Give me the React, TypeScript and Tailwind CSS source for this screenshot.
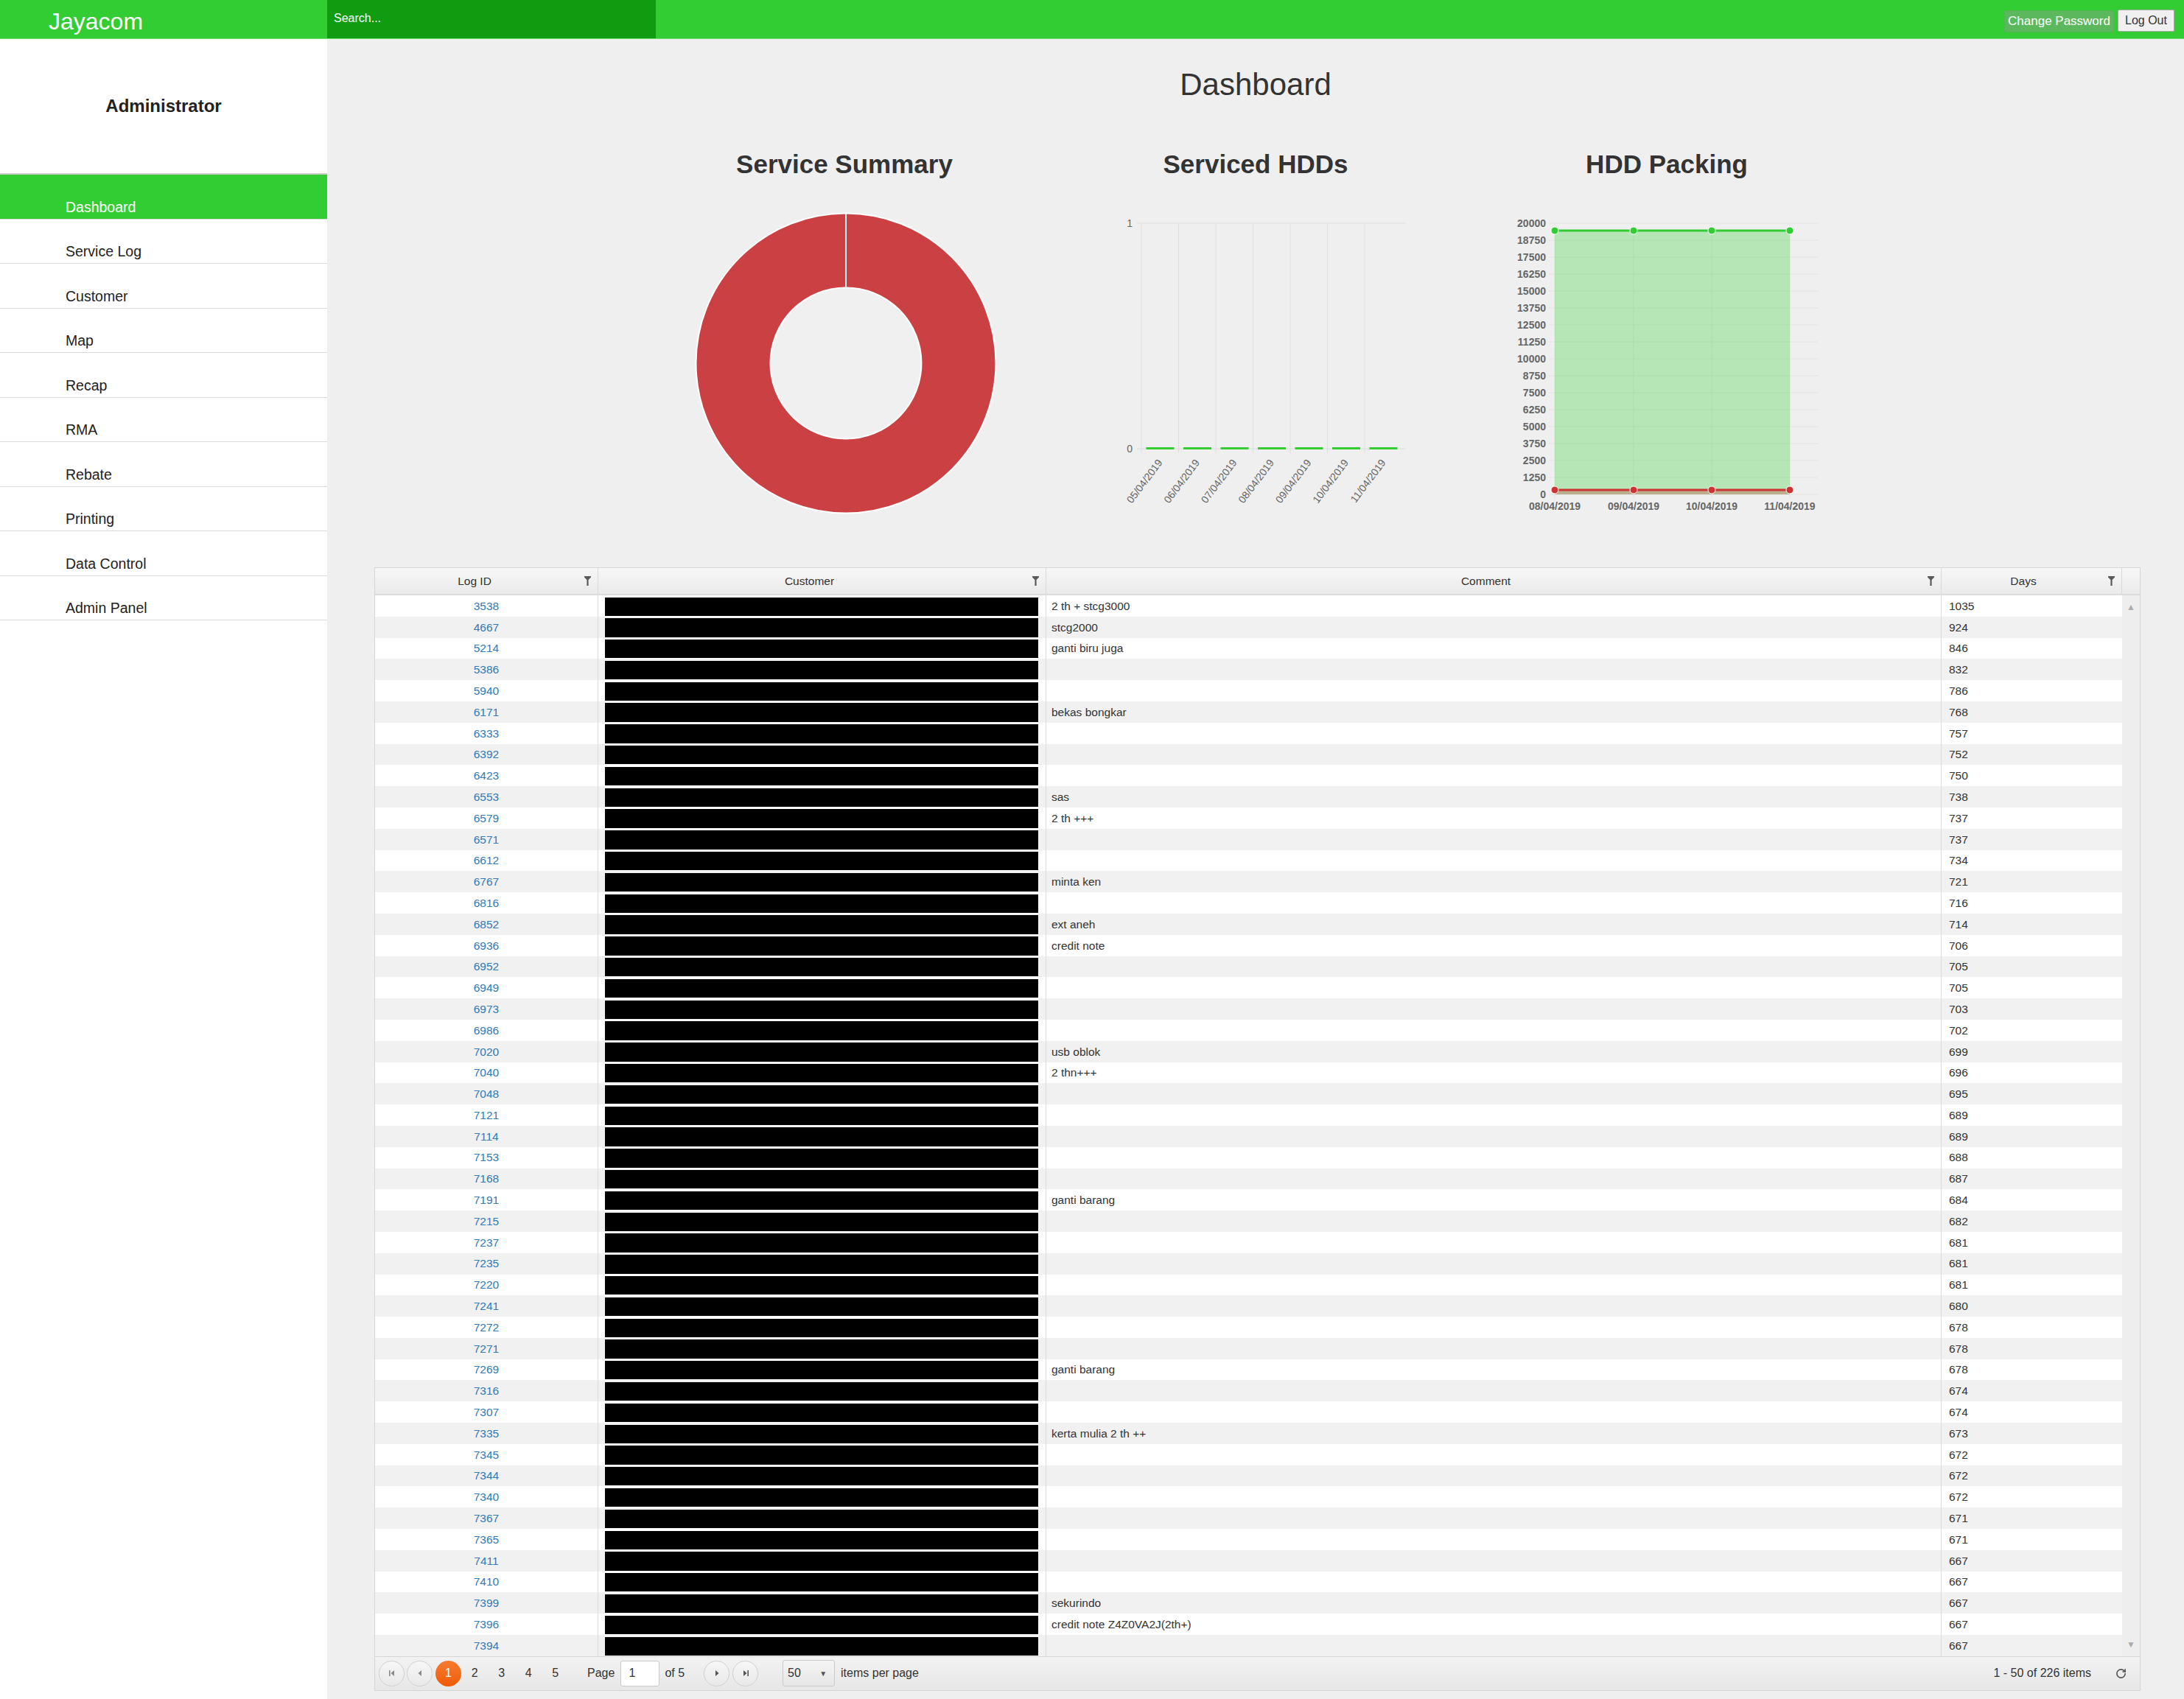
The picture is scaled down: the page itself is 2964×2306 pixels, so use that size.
import React from 'react';
import { RotateCw } from 'lucide-react';

type Row = { id: number; comment: string; days: number };

const rows: Row[] = [
  { id: 3538, comment: '2 th + stcg3000', days: 1035 },
  { id: 4667, comment: 'stcg2000', days: 924 },
  { id: 5214, comment: 'ganti biru juga', days: 846 },
  { id: 5386, comment: '', days: 832 },
  { id: 5940, comment: '', days: 786 },
  { id: 6171, comment: 'bekas bongkar', days: 768 },
  { id: 6333, comment: '', days: 757 },
  { id: 6392, comment: '', days: 752 },
  { id: 6423, comment: '', days: 750 },
  { id: 6553, comment: 'sas', days: 738 },
  { id: 6579, comment: '2 th +++', days: 737 },
  { id: 6571, comment: '', days: 737 },
  { id: 6612, comment: '', days: 734 },
  { id: 6767, comment: 'minta ken', days: 721 },
  { id: 6816, comment: '', days: 716 },
  { id: 6852, comment: 'ext aneh', days: 714 },
  { id: 6936, comment: 'credit note', days: 706 },
  { id: 6952, comment: '', days: 705 },
  { id: 6949, comment: '', days: 705 },
  { id: 6973, comment: '', days: 703 },
  { id: 6986, comment: '', days: 702 },
  { id: 7020, comment: 'usb oblok', days: 699 },
  { id: 7040, comment: '2 thn+++', days: 696 },
  { id: 7048, comment: '', days: 695 },
  { id: 7121, comment: '', days: 689 },
  { id: 7114, comment: '', days: 689 },
  { id: 7153, comment: '', days: 688 },
  { id: 7168, comment: '', days: 687 },
  { id: 7191, comment: 'ganti barang', days: 684 },
  { id: 7215, comment: '', days: 682 },
  { id: 7237, comment: '', days: 681 },
  { id: 7235, comment: '', days: 681 },
  { id: 7220, comment: '', days: 681 },
  { id: 7241, comment: '', days: 680 },
  { id: 7272, comment: '', days: 678 },
  { id: 7271, comment: '', days: 678 },
  { id: 7269, comment: 'ganti barang', days: 678 },
  { id: 7316, comment: '', days: 674 },
  { id: 7307, comment: '', days: 674 },
  { id: 7335, comment: 'kerta mulia 2 th ++', days: 673 },
  { id: 7345, comment: '', days: 672 },
  { id: 7344, comment: '', days: 672 },
  { id: 7340, comment: '', days: 672 },
  { id: 7367, comment: '', days: 671 },
  { id: 7365, comment: '', days: 671 },
  { id: 7411, comment: '', days: 667 },
  { id: 7410, comment: '', days: 667 },
  { id: 7399, comment: 'sekurindo', days: 667 },
  { id: 7396, comment: 'credit note Z4Z0VA2J(2th+)', days: 667 },
  { id: 7394, comment: '', days: 667 },
];

const menu = ['Dashboard', 'Service Log', 'Customer', 'Map', 'Recap', 'RMA', 'Rebate', 'Printing', 'Data Control', 'Admin Panel'];

const hddDates = ['05/04/2019', '06/04/2019', '07/04/2019', '08/04/2019', '09/04/2019', '10/04/2019', '11/04/2019'];
const packDates = ['08/04/2019', '09/04/2019', '10/04/2019', '11/04/2019'];
const packX = [127, 234, 340, 446];

const FilterIcon: React.FC = () => (
  <svg width="9" height="13" viewBox="0 0 9 13" className="absolute right-[9px] top-[11px]">
    <path d="M0 0H9V1.6L5.6 5V13H3.4V5L0 1.6Z" fill="#5a5a5a" />
  </svg>
);

const PagerBtn: React.FC<{ children: React.ReactNode }> = ({ children }) => (
  <div className="w-[35px] h-[35px] rounded-full border border-[#d0d0d0] bg-linear-to-b from-[#f7f7f7] to-[#e8e8e8] flex items-center justify-center">
    {children}
  </div>
);

const ServiceSummary: React.FC = () => (
  <svg width="558" height="480" className="mt-[7px]">
    <circle cx="281" cy="243" r="203.5" fill="#cb4143" stroke="#ffffff" strokeWidth="2" />
    <circle cx="281" cy="243" r="102.5" fill="#f0f0f0" stroke="#ffffff" strokeWidth="2" />
    <line x1="281" y1="39.5" x2="281" y2="140.5" stroke="#ffffff" strokeWidth="2" />
  </svg>
);

const ServicedHdds: React.FC = () => (
  <svg width="558" height="480" className="mt-[7px]">
    <line x1="118" y1="53" x2="483" y2="53" stroke="#dedede" strokeWidth="1" />
    <line x1="118" y1="359" x2="483" y2="359" stroke="#dedede" strokeWidth="1" />
    {hddDates.map((_, i) => (
      <line key={i} x1={124 + 50.5 * i} y1="53" x2={124 + 50.5 * i} y2="365" stroke="#dedede" strokeWidth="1" />
    ))}
    <text x="112" y="58" textAnchor="end" fontSize="14" fill="#666" fontFamily="Liberation Sans, Arial, sans-serif">1</text>
    <text x="112" y="364" textAnchor="end" fontSize="14" fill="#666" fontFamily="Liberation Sans, Arial, sans-serif">0</text>
    {hddDates.map((_, i) => (
      <rect key={i} x={124 + 50.5 * i + 6.5} y="357" width="38" height="3" fill="#33cc33" />
    ))}
    {hddDates.map((d, i) => {
      const x = 124 + 50.5 * (i + 0.5) + 4;
      const y = 378;
      return (
        <text
          key={d}
          x={x}
          y={y}
          textAnchor="end"
          fontSize="14"
          fill="#666"
          fontFamily="Liberation Sans, Arial, sans-serif"
          transform={`rotate(-53 ${x} ${y})`}
        >
          {d}
        </text>
      );
    })}
  </svg>
);

const HddPacking: React.FC = () => (
  <svg width="558" height="480" className="mt-[7px]">
    {Array.from({ length: 17 }).map((_, k) => (
      <g key={k}>
        <line x1="119" y1={53 + 23 * k} x2="484" y2={53 + 23 * k} stroke="#e2e2e2" strokeWidth="1" />
        <text
          x="115"
          y={58 + 23 * k}
          textAnchor="end"
          fontSize="14"
          fontWeight="bold"
          fill="#666"
          fontFamily="Liberation Sans, Arial, sans-serif"
        >
          {20000 - 1250 * k}
        </text>
      </g>
    ))}
    {packX.map((x) => (
      <line key={x} x1={x} y1="53" x2={x} y2="427" stroke="#e2e2e2" strokeWidth="1" />
    ))}
    <rect x="127" y="63" width="319" height="358" fill="rgba(51,204,51,0.3)" />
    <rect x="127" y="415" width="319" height="6" fill="rgba(204,51,51,0.3)" />
    <line x1="127" y1="63" x2="446" y2="63" stroke="#33cc33" strokeWidth="3" />
    <line x1="127" y1="415" x2="446" y2="415" stroke="#cc3333" strokeWidth="3" />
    {packX.map((x) => (
      <g key={x}>
        <circle cx={x} cy="63" r="5" fill="#33cc33" stroke="#ffffff" strokeWidth="1" />
        <circle cx={x} cy="415" r="5" fill="#cc3333" stroke="#ffffff" strokeWidth="1" />
      </g>
    ))}
    {packDates.map((d, i) => (
      <text
        key={d}
        x={packX[i]}
        y="442"
        textAnchor="middle"
        fontSize="14"
        fontWeight="bold"
        fill="#666"
        fontFamily="Liberation Sans, Arial, sans-serif"
      >
        {d}
      </text>
    ))}
  </svg>
);

export default function App() {
  return (
    <div className="w-[2964px] min-h-[2306px] flex flex-col bg-[#efefef] font-['Liberation_Sans',Arial,sans-serif] text-[#333]">
      {/* Top bar */}
      <header className="h-[53px] flex bg-[#32cd32] border-b border-[#6fdc6f]">
        <div className="w-[444px] flex items-center pl-[66px] pt-[6px] text-[32px] text-white leading-none">Jayacom</div>
        <div className="w-[446px] bg-[#109c10] flex items-center pl-[9px] pb-[3px] text-[16px] text-white">Search...</div>
        <div className="ml-auto flex items-center gap-[5px] pr-[13px]">
          <button className="h-[30px] w-[149px] rounded-[3px] bg-[#5cb85c] border border-[#56b356] text-white text-[17px] mt-[5px]">
            Change Password
          </button>
          <button className="h-[30px] w-[77px] rounded-[2px] bg-[#f0f0f0] border border-[#a9a9a9] text-[#333] text-[16px] mt-[3px]">
            Log Out
          </button>
        </div>
      </header>

      <div className="flex flex-1">
        {/* Sidebar */}
        <aside className="w-[444px] bg-white">
          <div className="h-[182px] pt-[76px] text-center text-[24px] font-bold leading-[30px] text-[#222]">Administrator</div>
          <nav className="border-t-2 border-[#cfcfcf]">
            {menu.map((m, i) => (
              <div
                key={m}
                className={`h-[60.5px] flex items-end pl-[89px] pb-[5px] border-b border-[#dadada] text-[19.5px] leading-[22px] ${
                  i === 0 ? 'bg-[#32cd32] text-white' : 'text-[#222]'
                }`}
              >
                {m}
              </div>
            ))}
          </nav>
        </aside>

        {/* Main */}
        <main className="flex-1 pt-[37px] pb-[13px]">
          <h1 className="text-center text-[42px] leading-[50px] text-[#333]">Dashboard</h1>

          <div className="mt-[63px] flex justify-center">
            <div className="w-[558px] flex flex-col items-center">
              <h2 className="text-[35px] leading-[40px] font-bold text-[#333]">Service Summary</h2>
              <ServiceSummary />
            </div>
            <div className="w-[558px] flex flex-col items-center">
              <h2 className="text-[35px] leading-[40px] font-bold text-[#333]">Serviced HDDs</h2>
              <ServicedHdds />
            </div>
            <div className="w-[558px] flex flex-col items-center">
              <h2 className="text-[35px] leading-[40px] font-bold text-[#333]">HDD Packing</h2>
              <HddPacking />
            </div>
          </div>

          {/* Grid */}
          <div className="mt-[40px] ml-[64px] w-[2397px] border border-[#d5d5d5] text-[15.5px]">
            <div className="flex h-[37px] border-b-2 border-[#dcdcdc] bg-linear-to-b from-[#f7f7f7] to-[#eaeaea] text-[#333]">
              <div className="relative w-[303px] flex items-center justify-center pr-[32px] border-r border-[#d9d9d9]">
                Log ID
                <FilterIcon />
              </div>
              <div className="relative w-[608px] flex items-center justify-center pr-[34px] border-r border-[#d9d9d9]">
                Customer
                <FilterIcon />
              </div>
              <div className="relative w-[1215px] flex items-center justify-center pr-[21px] border-r border-[#d9d9d9]">
                Comment
                <FilterIcon />
              </div>
              <div className="relative w-[245px] flex items-center justify-center pr-[22px] border-r border-[#d9d9d9]">
                Days
                <FilterIcon />
              </div>
              <div className="w-[24px]" />
            </div>

            <div className="flex">
              <div className="w-[2371px]">
                {rows.map((r, i) => (
                  <div key={r.id} className={`flex h-[28.8px] ${i % 2 === 0 ? 'bg-white' : 'bg-[#f1f1f1]'}`}>
                    <div className="w-[303px] flex items-center justify-center border-r border-[#dcdcdc] text-[#337ab7]">{r.id}</div>
                    <div className="w-[608px] border-r border-[#dcdcdc] pl-[9px] pr-[10px] pt-[2.5px] pb-[1px]">
                      <div className="h-full bg-black" />
                    </div>
                    <div className="w-[1215px] flex items-center pl-[7px] border-r border-[#dcdcdc] text-[#333]">{r.comment}</div>
                    <div className="w-[245px] flex items-center pl-[10px] text-[#333]">{r.days}</div>
                  </div>
                ))}
              </div>
              <div className="w-[24px] bg-[#eeeeee] flex flex-col items-center justify-between pt-[10px] pb-[10px] text-[12px] text-[#ababab] leading-none">
                <span>▲</span>
                <span>▼</span>
              </div>
            </div>

            {/* Pager */}
            <div className="h-[46px] flex items-center border-t border-[#d5d5d5] bg-linear-to-b from-[#f2f2f2] to-[#e7e7e7] pl-[5px] pr-[18px] text-[16px] text-[#333]">
              <PagerBtn>
                <svg width="8" height="8" viewBox="0 0 8 8">
                  <rect x="0" y="0" width="1.6" height="8" fill="#8a8a8a" />
                  <path d="M7 0V8L2.5 4Z" fill="#8a8a8a" />
                </svg>
              </PagerBtn>
              <div className="ml-[3px]">
                <PagerBtn>
                  <svg width="6" height="8" viewBox="0 0 6 8">
                    <path d="M5 0V8L0.5 4Z" fill="#8a8a8a" />
                  </svg>
                </PagerBtn>
              </div>
              <div className="ml-[4px] w-[35px] h-[35px] rounded-full bg-linear-to-b from-[#f67c2e] to-[#ef5a00] text-white flex items-center justify-center">
                1
              </div>
              {[2, 3, 4, 5].map((n) => (
                <div key={n} className="w-[36.5px] text-center">
                  {n}
                </div>
              ))}
              <span className="ml-[25px]">Page</span>
              <div className="ml-[8px] w-[53px] h-[35px] bg-white border border-[#cacaca] rounded-[3px] flex items-center pl-[10px]">1</div>
              <span className="ml-[7px]">of 5</span>
              <div className="ml-[26px]">
                <PagerBtn>
                  <svg width="6" height="8" viewBox="0 0 6 8">
                    <path d="M1 0V8L5.5 4Z" fill="#555" />
                  </svg>
                </PagerBtn>
              </div>
              <div className="ml-[4px]">
                <PagerBtn>
                  <svg width="8" height="8" viewBox="0 0 8 8">
                    <path d="M1 0V8L5.5 4Z" fill="#555" />
                    <rect x="6.4" y="0" width="1.6" height="8" fill="#555" />
                  </svg>
                </PagerBtn>
              </div>
              <div className="ml-[33px] w-[71px] h-[36px] rounded-[3px] border border-[#cacaca] bg-linear-to-b from-[#f5f5f5] to-[#e6e6e6] flex items-center pl-[6px] pr-[10px] justify-between">
                <span>50</span>
                <span className="text-[10px] text-[#555]">▼</span>
              </div>
              <span className="ml-[8px]">items per page</span>
              <span className="ml-auto">1 - 50 of 226 items</span>
              <RotateCw className="ml-[33px] w-[15px] h-[15px] text-[#555]" strokeWidth={2.6} />
            </div>
          </div>
        </main>
      </div>
    </div>
  );
}
